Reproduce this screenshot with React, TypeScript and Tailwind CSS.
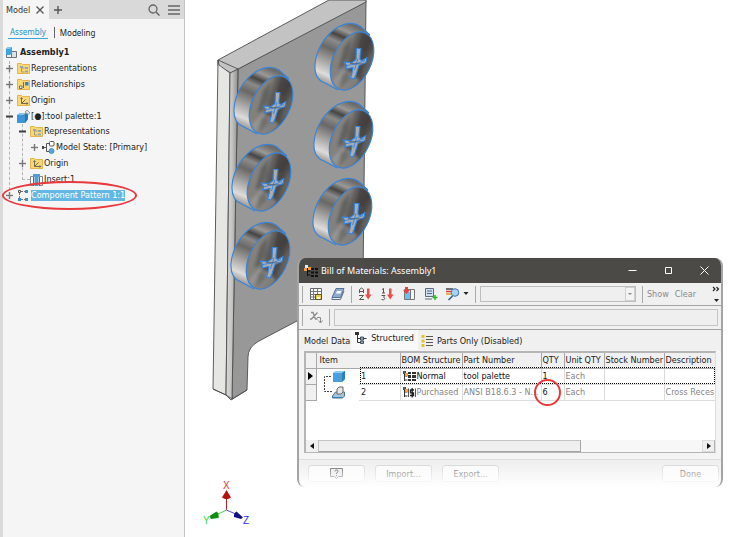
import type { ReactNode } from "react";
import clsx from "clsx";

type NodeIcon =
  | "assembly"
  | "reps"
  | "relations"
  | "origin"
  | "part"
  | "state"
  | "insert"
  | "pattern";

type TreeNode = {
  label: string;
  icon: NodeIcon;
  level: 0 | 1 | 2 | 3;
  toggle?: "plus" | "minus";
  bold?: boolean;
  selected?: boolean;
};

const NODES: TreeNode[] = [
  { label: "Assembly1", icon: "assembly", level: 0, bold: true },
  { label: "Representations", icon: "reps", level: 1, toggle: "plus" },
  { label: "Relationships", icon: "relations", level: 1, toggle: "plus" },
  { label: "Origin", icon: "origin", level: 1, toggle: "plus" },
  { label: "[●]:tool palette:1", icon: "part", level: 1, toggle: "minus" },
  { label: "Representations", icon: "reps", level: 2, toggle: "minus" },
  { label: "Model State: [Primary]", icon: "state", level: 3, toggle: "plus" },
  { label: "Origin", icon: "origin", level: 2, toggle: "plus" },
  { label: "Insert:1", icon: "insert", level: 2 },
  {
    label: "Component Pattern 1:1",
    icon: "pattern",
    level: 1,
    toggle: "plus",
    selected: true,
  },
];

const INDENT = ["pl-[2px]", "pl-[2px]", "pl-[15px]", "pl-[27px]"];

const SCREWS = [
  [352, 61],
  [271, 105],
  [351, 139],
  [269, 182],
  [350, 216],
  [268, 260],
];

/* Icons of the model tree */
function Folder({ children }: { children: ReactNode }) {
  return (
    <>
      <path d="M.5 1.500h4l1 1h7v9H.5z" fill="#f8d777" stroke="#e3b54c" />
      {children}
    </>
  );
}

function TreeIcon({ icon }: { icon: NodeIcon }) {
  return (
    <svg viewBox="0 0 13 13" className="h-[13px] w-[13px] shrink-0">
      {icon === "assembly" && (
        <>
          <path d="M6.500 5.500h5v6h-5z" fill="#dfe2e4" stroke="#6b747d" />
          <path d="M1.500 7.500h5v4h-5z" fill="#eceeef" stroke="#6b747d" />
          <path d="M1 3l2-2h4v6L5 9H1z" fill="#3ea3de" />
          <path d="M1 3l2-2h4L5 3z" fill="#7cc9f2" />
        </>
      )}
      {icon === "reps" && (
        <Folder>
          <path d="M4.500 6v4h3M4.500 6h3" fill="none" stroke="#a59c7a" />
          <path d="M3 4h3v2H3zM8 5h3v2H8zM8 8.500h3v2H8z" fill="#93a8ae" />
        </Folder>
      )}
      {icon === "relations" && (
        <Folder>
          <path d="M6.500 4v6" stroke="#d8432f" />
          <path d="M8 4h3.500v3.500H8z" fill="#3484c4" />
          <path d="M2.500 8h2.500v2.500H2.500z" fill="#fff" stroke="#6a6a6a" />
        </Folder>
      )}
      {icon === "origin" && (
        <Folder>
          <path d="M4.500 4.500v5h6M4.500 9.500l4-4" fill="none" stroke="#6e6a55" />
          <path d="M3 5l1.500-2L6 5zM9.500 8l2 1.500-2 1.500z" fill="#6e6a55" />
        </Folder>
      )}
      {icon === "part" && (
        <>
          <path d="M0 5l3-2h8v6l-3 4H0z" fill="#3b97d9" />
          <path d="M0 5l3-2h8L8 5z" fill="#7cc4f1" />
          <path d="M8 5l3-2v6l-3 4z" fill="#2478b8" />
          <path d="M6.500 6l3-3" stroke="#666" />
          <path d="M8 2l2-2 3 3-2 1.500z" fill="#e6e6e6" stroke="#777" strokeWidth=".7" />
        </>
      )}
      {icon === "state" && (
        <>
          <path d="M0 6.500h4M4.500 2.500v8M4.500 2.500h3M4.500 10.500h3" fill="none" stroke="#555" />
          <path d="M0 5h2v3H0z" fill="#444" />
          <rect x="7.500" y=".5" width="4.500" height="4.500" rx="1" fill="#fff" stroke="#555" />
          <circle cx="9.500" cy="10" r="2.500" fill="#58a8dc" stroke="#2d78ae" strokeWidth=".7" />
        </>
      )}
      {icon === "insert" && (
        <>
          <path d="M.5 3.500h3v9h-3zM9.500 3.500h3v9h-3z" fill="#fff" stroke="#888" />
          <path d="M3 1h7v3H8.500v9h-4V4H3z" fill="#4e9fd6" />
          <path d="M3.500 4v9M9.500 4v9" stroke="#d33" />
        </>
      )}
      {icon === "pattern" && (
        <>
          <path d="M4 2.500h4M4 10.500h4M2.500 4v5" fill="none" stroke="#777" strokeDasharray="2 1" />
          <path d="M1.500 1.500h2v2h-2z" fill="#fff" stroke="#555" />
          <path d="M8 1h3v3H8zM1 9h3v3H1zM8 9h3v3H8z" fill="#3d8ec9" />
        </>
      )}
    </svg>
  );
}

function Toggle({ kind }: { kind?: "plus" | "minus" }) {
  return (
    <svg viewBox="0 0 9 9" className="h-[9px] w-[9px] shrink-0">
      {kind && (
        <path
          d="M1 4.500h7"
          stroke={kind === "minus" ? "#3d3d3d" : "#777"}
          strokeWidth={kind === "minus" ? 2 : 1.4}
        />
      )}
      {kind === "plus" && <path d="M4.500 1v7" stroke="#777" strokeWidth="1.400" />}
    </svg>
  );
}

function ModelTree() {
  return (
    <div className="relative mt-[5px]">
      <span className="absolute left-[6px] top-4 h-[134px] border-l border-dashed border-[#b5b5b5]" />
      <span className="absolute left-[19px] top-[79px] h-[56px] border-l border-dashed border-[#b5b5b5]" />
      <span className="absolute left-[19px] top-[134px] w-2 border-t border-dashed border-[#b5b5b5]" />
      <ul className="relative grid h-[158px] grid-rows-10">
        {NODES.map((node, i) => (
          <li key={i} className={clsx("flex items-center whitespace-nowrap", INDENT[node.level])}>
            {node.level > 0 && (
              <>
                <Toggle kind={node.toggle} />
                <span className="w-[3px]" />
              </>
            )}
            <TreeIcon icon={node.icon} />
            <span
              className={clsx(
                "ml-px leading-[11px]",
                node.bold && "pl-px font-bold",
                node.selected && "bg-[#63b7e4] text-white"
              )}
            >
              {node.label}
            </span>
          </li>
        ))}
      </ul>
    </div>
  );
}

function Sidebar() {
  return (
    <aside className="w-[185px] shrink-0 border-l-[3px] border-r border-l-[#dadada] border-r-[#c4c4c4] bg-[#f5f5f5]">
      <div className="flex h-[19px] items-center bg-[#d9d9d9]">
        <button className="flex h-full w-[46px] items-center gap-[6px] bg-[#f5f5f5] pl-[3px] text-[#333]">
          Model
          <svg viewBox="0 0 8 8" className="h-2 w-2">
            <path d="M.5.5l7 7M7.500.5l-7 7" stroke="#555" strokeWidth="1.300" />
          </svg>
        </button>
        <button aria-label="Add panel" className="ml-[5px]">
          <svg viewBox="0 0 8 8" className="h-2 w-2">
            <path d="M4 0v8M0 4h8" stroke="#555" strokeWidth="1.400" />
          </svg>
        </button>
        <button aria-label="Search" className="ml-auto">
          <svg viewBox="0 0 12 12" className="h-3 w-3">
            <circle cx="5" cy="5" r="4" fill="none" stroke="#666" strokeWidth="1.300" />
            <path d="M8 8l3.500 3.500" stroke="#666" strokeWidth="1.500" />
          </svg>
        </button>
        <button aria-label="Menu" className="ml-2 mr-1">
          <svg viewBox="0 0 12 12" className="h-3 w-3">
            <path d="M0 2h12M0 6h12M0 10h12" stroke="#666" strokeWidth="1.300" />
          </svg>
        </button>
      </div>
      <nav className="mt-[6px] flex h-[15px] items-center font-['Noto_Sans',sans-serif] text-[8px] text-[#222]">
        <a href="#assembly" className="ml-[5px] border-b border-[#3aa5d8] px-[2px] leading-[12px] text-[#1b93cf]">
          Assembly
        </a>
        <span className="ml-[6px] h-[11px] w-px bg-[#666]" />
        <a href="#modeling" className="ml-[5px] leading-[12px]">
          Modeling
        </a>
      </nav>
      <ModelTree />
    </aside>
  );
}

/* Pan head screw, origin in the middle of its face */
function Screw({ x, y }: { x: number; y: number }) {
  return (
    <g transform={`translate(${x} ${y})`}>
      <path
        d="M18-26L8-35C2-38.500-6-38-13-34.500C-25-28-36-13-37 4C-37.500 14-33 20-27 22L-12 29z"
        fill="url(#side)"
      />
      <g clipPath="url(#face)">
        <rect x="-26" y="-32" width="52" height="64" fill="url(#faceFill)" />
        <g filter="url(#soft)">
          <path d="M-16-16L-4-28L4-30L-2-10L-6 8L-16 26L-24 16z" fill="#8d8b89" opacity=".7" />
          <path d="M-8-14L0-24L-3-6L-8 6L-14 8z" fill="#4f4d4b" opacity=".6" />
          <path d="M-20 20L-8 8L0 12L8 20L-4 34L-16 32z" fill="#a5a3a1" opacity=".6" />
          <path d="M-10 14L-4 10L-2 18L-12 28z" fill="#5b5957" opacity=".5" />
          <path d="M10-30L22-22L12-8L6-14z" fill="#3a3836" opacity=".6" />
          <path d="M16-4L24-16L20 6L8 20z" fill="#6b6967" opacity=".7" />
        </g>
      </g>
      <g fill="none" stroke="#3584dc" strokeWidth="1.100">
        <ellipse rx="19" ry="31" transform="rotate(26)" />
        <path d="M18-26L8-35C2-38.500-6-38-13-34.500C-25-28-36-13-37 4C-37.500 14-33 20-27 22L-14 29" />
      </g>
      <path
        d="M4.500-12.500H9L8-5L8-1.500L10-.5L15-3.500L14 1.500L7 4.500L5.500 9L4 14L2 18L-1.500 17L0 12L1 6.500L-6.500 8L-5 4.500L-8 1L0 1.500L4-1.500z"
        fill="#a9adb1"
        stroke="#2f84e4"
        strokeWidth="1.100"
        strokeLinejoin="round"
      />
      <path d="M-5 4.500L4 3L13-.5M6-2.500L2.500 9" fill="none" stroke="#2f84e4" strokeWidth=".9" />
      <path d="M-2 2.500L11 3" fill="none" stroke="#4b5968" strokeWidth=".8" />
    </g>
  );
}

function Viewport() {
  return (
    <>
      <svg viewBox="185 0 200 410" className="block h-[410px] w-[200px]">
        <defs>
          <linearGradient id="side" gradientUnits="userSpaceOnUse" x1="4" y1="-34" x2="-22" y2="26">
            <stop offset="0" stopColor="#6d6b69" />
            <stop offset=".12" stopColor="#9b9997" />
            <stop offset=".22" stopColor="#474543" />
            <stop offset=".32" stopColor="#8d8b89" />
            <stop offset=".46" stopColor="#6a6866" />
            <stop offset=".64" stopColor="#a09e9c" />
            <stop offset=".85" stopColor="#dddcda" />
            <stop offset="1" stopColor="#8f8e8c" />
          </linearGradient>
          <linearGradient id="faceFill" x1="0" y1="0" x2="1" y2=".5">
            <stop offset="0" stopColor="#777573" />
            <stop offset=".5" stopColor="#666462" />
            <stop offset=".75" stopColor="#4a4846" />
            <stop offset="1" stopColor="#5b5957" />
          </linearGradient>
          <linearGradient id="bend">
            <stop offset="0" stopColor="#dadad9" />
            <stop offset=".5" stopColor="#c4c4c3" />
            <stop offset="1" stopColor="#8e8e8e" />
          </linearGradient>
          <clipPath id="face">
            <ellipse rx="19" ry="31" transform="rotate(26)" />
          </clipPath>
          <filter id="soft">
            <feGaussianBlur stdDeviation="1.800" />
          </filter>
        </defs>
        <g stroke="#4d4d4d" strokeWidth=".9" strokeLinejoin="round">
          <path d="M238 69L366 1L363 285L297 321L259 341Q248 347 248 357L247 390L232 399z" fill="#989898" />
          <path d="M218 60L329 0H366V2L238 69L231 73L218 66z" fill="#c3c3c3" />
          <path d="M218 60L219 65L230 73L226 395L213 389z" fill="#e6e6e4" />
          <path d="M230 73L238 69L232 399L226 395z" fill="url(#bend)" />
          <path d="M213 389L226 395L231 400L247 390" fill="none" />
          <path d="M218 60L238 69" fill="none" />
        </g>
        {SCREWS.map(([x, y]) => (
          <Screw key={`${x}-${y}`} x={x} y={y} />
        ))}
      </svg>
      {/* Axis triad */}
      <svg
        viewBox="0 0 60 50"
        className="absolute left-[15px] top-[480px] h-[50px] w-[60px] font-['Liberation_Sans'] text-[10px]"
      >
        <path d="M26.500 30V17" stroke="#b02020" />
        <path d="M26.500 30L16 35" stroke="#3ddc3d" />
        <path d="M26.500 30L38 35" stroke="#4a4ae0" />
        <path d="M22 17.500L26.500 10L31 17.500Q26.500 21 22 17.500z" fill="#b80f0f" />
        <path d="M9.500 36L16.500 31.500Q19.500 34 18.500 38L11 39z" fill="#0f8f0f" />
        <path d="M43 37.500L36.500 31.500Q33.500 33 34 37L41 39z" fill="#10108f" />
        <text x="23" y="9" fill="#f03030">X</text>
        <text x="3" y="44" fill="#30e030">Y</text>
        <text x="43" y="44" fill="#3030f0">Z</text>
      </svg>
    </>
  );
}

/* Toolbar */
function ToolButton({ label, children }: { label: string; children: ReactNode }) {
  return (
    <button aria-label={label} className="shrink-0">
      <svg viewBox="0 0 14 14" className="h-[14px] w-[14px]">
        {children}
      </svg>
    </button>
  );
}

function Separator() {
  return <span className="h-[17px] w-px shrink-0 bg-[#a9a9a9]" />;
}

function RedArrow() {
  return <path d="M9 1.500h2.500v6h2L10.200 12.500L7 7.500h2z" fill="#ef4b4b" />;
}

function Toolbar() {
  return (
    <div className="flex h-[23px] items-center border-b border-[#a3a3a3] pl-[3px] pr-px">
      <Separator />
      <span className="w-[6px]" />
      <ToolButton label="Choose columns">
        <path d="M1.500 1.500h11v11h-11z" fill="#fff" stroke="#666" />
        <path d="M4.500 1.500v11M8.500 1.500v9M1.500 4.500h11M1.500 7.500h11M1.500 10h5" fill="none" stroke="#777" />
        <path d="M6.500 7.500h6v5h-6z" fill="#e8cf48" stroke="#5c5522" />
        <path d="M8 10h3v2H8z" fill="#fff" />
      </ToolButton>
      <span className="w-2" />
      <ToolButton label="Engineer's notebook">
        <path d="M5 1.500h8l-3.500 9H1z" fill="#8eaad0" stroke="#5a7197" />
        <path d="M6 4h4.500l-1 2.500H5z" fill="#fff" />
        <path d="M1 11v1.500h8.500L13 4" fill="none" stroke="#5e7190" />
      </ToolButton>
      <span className="w-[6px]" />
      <Separator />
      <span className="w-[6px]" />
      <ToolButton label="Sort items">
        <path d="M1.500 6V2.500L3.500 1L5.500 2.500V6M1.500 4.500h4M1 8.500h4.500L1.500 12.500H6" fill="none" stroke="#555" />
        <RedArrow />
      </ToolButton>
      <span className="w-2" />
      <ToolButton label="Renumber items">
        <path d="M2 2.500l1.500-1V6M2 6h3M1.500 8.500H5L3.500 10L5 11.500L3.500 12.800L1.500 12.500" fill="none" stroke="#555" />
        <RedArrow />
      </ToolButton>
      <span className="w-2" />
      <ToolButton label="Add custom column">
        <path d="M2.500 2.500h10v10h-10z" fill="#f6f6f6" stroke="#777" />
        <path d="M3 5h5v7H3z" fill="#6fc0f2" />
        <path d="M8.500 2.500v10" stroke="#777" />
        <path d="M3 0h3v3h2L4.500 7L1 3h2z" fill="#e93e3e" />
      </ToolButton>
      <span className="w-2" />
      <ToolButton label="Create expression">
        <path d="M1.500 1.500h8v8h-8z" fill="#cde0f3" stroke="#5d6b7a" />
        <path d="M3 4h5M3 6.500h5M1 12h7" stroke="#5d6b7a" />
        <path d="M11 8v5M8.500 10.500h5" stroke="#2fb32f" strokeWidth="1.500" />
      </ToolButton>
      <span className="w-2" />
      <ToolButton label="View options">
        <path d="M0 2h7" stroke="#444" strokeWidth="1.500" />
        <path d="M0 4.500h5" stroke="#e03c3c" strokeWidth="1.500" />
        <path d="M0 7h5" stroke="#e59a2c" strokeWidth="1.500" />
        <path d="M6.500 9l-4 4" stroke="#2c5c92" strokeWidth="1.600" />
        <circle cx="9" cy="5.500" r="3.800" fill="#a8d2f3" stroke="#3d74ac" />
      </ToolButton>
      <svg viewBox="0 0 6 4" className="ml-[3px] h-1 w-[6px] shrink-0">
        <path d="M.5 0h5L3 3z" fill="#222" />
      </svg>
      <span className="w-[6px]" />
      <Separator />
      <div className="relative ml-1 h-4 flex-1">
        <select
          aria-label="Column value"
          disabled
          className="h-full w-full appearance-none border border-[#bdbdbd] bg-[#efefef] opacity-100"
        />
        <span className="absolute right-px top-px flex h-[14px] w-[10px] items-center justify-center border border-[#d0d0d0] bg-[#f3f3f3]">
          <svg viewBox="0 0 4 2" className="h-[2px] w-1">
            <path d="M0 0h4L2 2z" fill="#888" />
          </svg>
        </span>
      </div>
      <span className="w-[6px]" />
      <Separator />
      <button className="ml-1 text-[#8a8a8a]">Show</button>
      <button className="ml-[6px] text-[#8a8a8a]">Clear</button>
      <button aria-label="More" className="ml-4">
        <svg viewBox="0 0 8 18" className="h-[18px] w-2">
          <path d="M1 2l2 2-2 2M4.500 2l2 2-2 2" fill="none" stroke="#222" strokeWidth="1.200" />
          <path d="M2 14h5l-2.500 3z" fill="#222" />
        </svg>
      </button>
    </div>
  );
}

/* Table */
function BomIcon({ purchased }: { purchased?: boolean }) {
  return (
    <svg viewBox="0 0 14 12" className="h-3 w-[14px] shrink-0">
      <path d="M2.500 4v7M2.500 6h3M2.500 10h3" fill="none" stroke="#333" />
      <path d="M1 1h3v3H1z" fill="#555" />
      <path d="M3 3h3v3H3z" fill="#f0a030" />
      {purchased ? (
        <>
          <path d="M6.500 2.500v8.500M13.500 2.500v8.500" stroke="#555" />
          <path d="M12 4H8.500v2.800h3V9.500H8M10.200 2v9.500" fill="none" stroke="#222" strokeWidth="1.300" />
        </>
      ) : (
        <path d="M6 2h3v2H6zM10 2h4v2h-4zM6 5h3v3H6zM10 5h4v3h-4zM6 9h3v2H6zM10 9h4v2h-4z" fill="#333" />
      )}
    </svg>
  );
}

const HEADERS = ["BOM Structure", "Part Number", "QTY", "Unit QTY", "Stock Number", "Description"];

const ROWS = [
  { item: "1", structure: "Normal", part: "tool palette", qty: "1", unit: "Each", stock: "", description: "" },
  {
    item: "2",
    structure: "Purchased",
    part: "ANSI B18.6.3 - N...",
    qty: "6",
    unit: "Each",
    stock: "",
    description: "Cross Reces",
  },
];

function BomTable() {
  return (
    <div className="border-b border-l-2 border-r border-t-2 border-[#b5b5b5] border-r-[#ddd] bg-white">
      <div className="h-[87px] overflow-hidden">
        <table className="w-full table-fixed border-collapse text-left">
          <colgroup>
            <col className="w-[10px]" />
            <col className="w-[43px]" />
            <col className="w-[41px]" />
            <col className="w-[62px]" />
            <col className="w-[79px]" />
            <col className="w-[23px]" />
            <col className="w-[40px]" />
            <col className="w-[60px]" />
            <col />
          </colgroup>
          <thead>
            <tr className="h-[15px] border-b border-[#a8a8a8] bg-[#f0f0f0] text-[#222]">
              <th className="border-r border-[#a8a8a8]" />
              <th colSpan={2} className="border-r border-[#a8a8a8] pl-[3px] font-normal">
                Item
              </th>
              {HEADERS.map((h) => (
                <th key={h} className="whitespace-nowrap border-r border-[#a8a8a8] pl-px font-normal last:border-r-0">
                  {h}
                </th>
              ))}
            </tr>
          </thead>
          <tbody className="leading-[11px]">
            {ROWS.map((r, i) => {
              const first = i === 0;
              const cell = "whitespace-nowrap border-b border-r border-[#dcdcdc] pl-px last:border-r-0";
              const tone = first ? "text-[#111]" : "text-[#858585]";
              return (
                <tr key={r.item} className="relative h-4">
                  <td className="border-b border-r border-[#a8a8a8] bg-[#f0f0f0]">
                    {first && (
                      <svg viewBox="0 0 5 8" className="mx-auto h-2 w-[5px]">
                        <path d="M0 0l5 4-5 4z" fill="#000" />
                      </svg>
                    )}
                  </td>
                  <td>
                    <svg viewBox="0 0 40 15" className="h-[15px] w-10">
                      {first ? (
                        <>
                          <path d="M7.500 15V7.500H15" fill="none" stroke="#444" strokeDasharray="2 1" />
                          <path d="M16 4l3-2h9v8l-3 3h-9z" fill="#4b9fdd" />
                          <path d="M16 4l3-2h9l-3 2z" fill="#8ccbf3" />
                          <path d="M25 4l3-2v8l-3 3z" fill="#2f7fbd" />
                        </>
                      ) : (
                        <>
                          <path d="M7.500 0v6.500H15" fill="none" stroke="#444" strokeDasharray="2 1" />
                          <path d="M15.500 11l3-4h9v4l-2 2h-10z" fill="#a9c3d6" stroke="#50708c" />
                          <path d="M20 9V4l2-2h4v5l-2 2z" fill="#e6e6e6" stroke="#666" />
                          <path d="M15 12.500h11" stroke="#2f7fbd" />
                        </>
                      )}
                    </svg>
                  </td>
                  <td className={clsx(cell, "text-[#222]")}>
                    <span className="pl-px">{r.item}</span>
                    {/* Focus rectangle of the current row */}
                    {first && (
                      <span className="absolute -top-px bottom-0 left-[54px] right-0 border border-dotted border-black" />
                    )}
                  </td>
                  <td className={clsx(cell, tone)}>
                    <span className="flex items-center gap-px">
                      <BomIcon purchased={!first} />
                      {r.structure}
                    </span>
                  </td>
                  <td className={clsx(cell, tone)}>{r.part}</td>
                  <td className={clsx(cell, "text-[#111]")}>{r.qty}</td>
                  <td className={clsx(cell, "text-[#858585]")}>{r.unit}</td>
                  <td className={cell}>{r.stock}</td>
                  <td className={clsx(cell, "text-[#858585]")}>{r.description}</td>
                </tr>
              );
            })}
          </tbody>
        </table>
      </div>
      <div className="flex h-3 items-center bg-[#f7f7f7]">
        <button aria-label="Scroll left" className="flex h-full w-3 items-center justify-center bg-[#f0f0f0]">
          <svg viewBox="0 0 4 6" className="h-[6px] w-1">
            <path d="M4 0L0 3l4 3z" fill="#111" />
          </svg>
        </button>
        <span className="h-full w-[263px] border border-[#c4c4c4] border-b-[#a5a5a5] border-r-[#a5a5a5] bg-[#efefef]" />
        <button
          aria-label="Scroll right"
          className="ml-auto flex h-full w-[13px] items-center justify-center border border-[#dcdcdc] border-r-[#b0b0b0] bg-[#f0f0f0]"
        >
          <svg viewBox="0 0 4 6" className="h-[6px] w-1">
            <path d="M0 0l4 3-4 3z" fill="#111" />
          </svg>
        </button>
      </div>
    </div>
  );
}

function FooterButton({ children, label }: { children: ReactNode; label?: string }) {
  return (
    <button
      aria-label={label}
      className="flex h-[17px] w-[57px] items-center justify-center rounded-[3px] border border-[#d6d6d6] bg-[#fafafa] text-[#666]"
    >
      {children}
    </button>
  );
}

function BomDialog() {
  return (
    <section className="absolute left-[112px] right-[17px] top-[258px] overflow-hidden rounded-lg border-l-2 border-r-2 border-[#a4a4a4] bg-[#f0f0f0]">
      <header className="-mx-[2px] flex h-[25px] items-center bg-[#4b4a47] pl-[7px] pr-[14px] text-white">
        <svg viewBox="0 0 14 14" className="h-[14px] w-[14px]">
          <path d="M3.500 4v8M3.500 7h3M3.500 11h3" fill="none" stroke="#111" />
          <path d="M1 1h3v3H1z" fill="#e8edf5" />
          <path d="M0 4h3v3H0zM4 3h3v3H4z" fill="#f09a2a" />
          <path d="M7 4h3v2H7zM11 4h3v2h-3zM7 7.500h3v2H7zM11 7.500h3v2h-3zM7 11h3v2H7zM11 11h3v2h-3z" fill="#111" />
        </svg>
        <h1 className="ml-[3px] font-['Noto_Sans',sans-serif] text-[9px]">Bill of Materials: Assembly1</h1>
        <div className="ml-auto flex gap-[27px]">
          <button aria-label="Minimize">
            <svg viewBox="0 0 9 9" className="h-[9px] w-[9px]">
              <path d="M.5 4.500h8" stroke="#fff" />
            </svg>
          </button>
          <button aria-label="Maximize">
            <svg viewBox="0 0 9 9" className="h-[9px] w-[9px]">
              <path d="M1.500 1.500h6v6h-6z" fill="none" stroke="#fff" />
            </svg>
          </button>
          <button aria-label="Close">
            <svg viewBox="0 0 9 9" className="h-[9px] w-[9px]">
              <path d="M.5.5l8 8M8.500.5l-8 8" stroke="#fff" />
            </svg>
          </button>
        </div>
      </header>
      <Toolbar />
      <div className="flex h-6 items-center border-b border-[#a3a3a3] px-[3px]">
        <Separator />
        <svg viewBox="0 0 14 14" className="ml-[6px] h-[14px] w-[14px]">
          <path d="M2 1.500h2L6.500 8H8.500M8.500 1.500L2.500 8H1" fill="none" stroke="#8c8c8c" strokeWidth="1.300" />
          <path d="M8 6.500h3.500v5M9.500 9.500l2 2.500 2-2.500" fill="none" stroke="#8c8c8c" />
        </svg>
        <span className="w-[6px]" />
        <Separator />
        <input
          aria-label="Formula"
          disabled
          className="ml-1 h-[17px] min-w-0 flex-1 border border-[#c4c4c4] bg-[#efefef]"
        />
      </div>
      <div role="tablist" className="flex h-5 items-end text-[#222]">
        <button role="tab" className="h-[18px] pl-[5px] pr-px">
          Model Data
        </button>
        <button role="tab" aria-selected="true" className="flex h-5 items-start gap-1 bg-[#f9f9f9] px-1 pt-[2px]">
          <svg viewBox="0 0 12 12" className="h-3 w-3">
            <path d="M2.500 3v7.500h3M2.500 6.500h9" fill="none" stroke="#333" />
            <path d="M0 0h4v3H0z" fill="#333" />
            <path d="M5.500 5h3v3h-3zM5.500 9h3v2.500h-3z" fill="#7fb4dc" stroke="#333" strokeWidth=".8" />
          </svg>
          Structured
        </button>
        <button role="tab" className="flex h-[18px] items-center gap-1 pl-[3px]">
          <svg viewBox="0 0 12 12" className="h-3 w-3">
            <path d="M.5 0h3v3h-3zM.5 4.500h3v3h-3zM.5 9h3v3h-3z" fill="#e6c22c" />
            <path d="M5 1.500h7M5 4.500h7M5 7.500h7M5 10.500h7" stroke="#555" />
          </svg>
          Parts Only (Disabled)
        </button>
      </div>
      <div className="border-b border-[#dedede] bg-[#f4f4f4] px-[5px] pb-[6px] pt-px">
        <BomTable />
      </div>
      <footer className="flex h-[27px] items-start gap-[10px] pl-[9px] pr-[2px] pt-[5px]">
        <FooterButton label="Help">
          <svg viewBox="0 0 13 13" className="h-[13px] w-[13px]">
            <path d="M.5 1.500h12v8h-4l-2 2-2-2h-4z" fill="#e4e8ee" stroke="#666" />
            <path d="M5 4.500Q5 3 6.500 3T8 4.500Q8 5.500 6.500 6V7M6.500 8v1" fill="none" stroke="#444" />
          </svg>
        </FooterButton>
        <FooterButton>Import...</FooterButton>
        <FooterButton>Export...</FooterButton>
        <span className="flex-1" />
        <FooterButton>Done</FooterButton>
      </footer>
      <div className="pointer-events-none absolute -inset-x-[2px] bottom-0 h-6 bg-linear-to-b from-transparent to-white" />
    </section>
  );
}

export default function App() {
  return (
    <div className="relative flex h-screen overflow-hidden bg-white font-['DejaVu_Sans_Condensed','DejaVu_Sans',sans-serif] text-[9px] leading-[12px] text-[#222]">
      <Sidebar />
      <main className="relative min-w-0 flex-1">
        <Viewport />
        <BomDialog />
      </main>
      {/* Callouts */}
      <span className="absolute left-[2px] top-[181px] h-[29px] w-[135px] rounded-[50%] border-2 border-[#e8393c]" />
      <span className="absolute left-[534px] top-[379px] h-[27px] w-[27px] rounded-full border-2 border-[#e8393c]" />
    </div>
  );
}
